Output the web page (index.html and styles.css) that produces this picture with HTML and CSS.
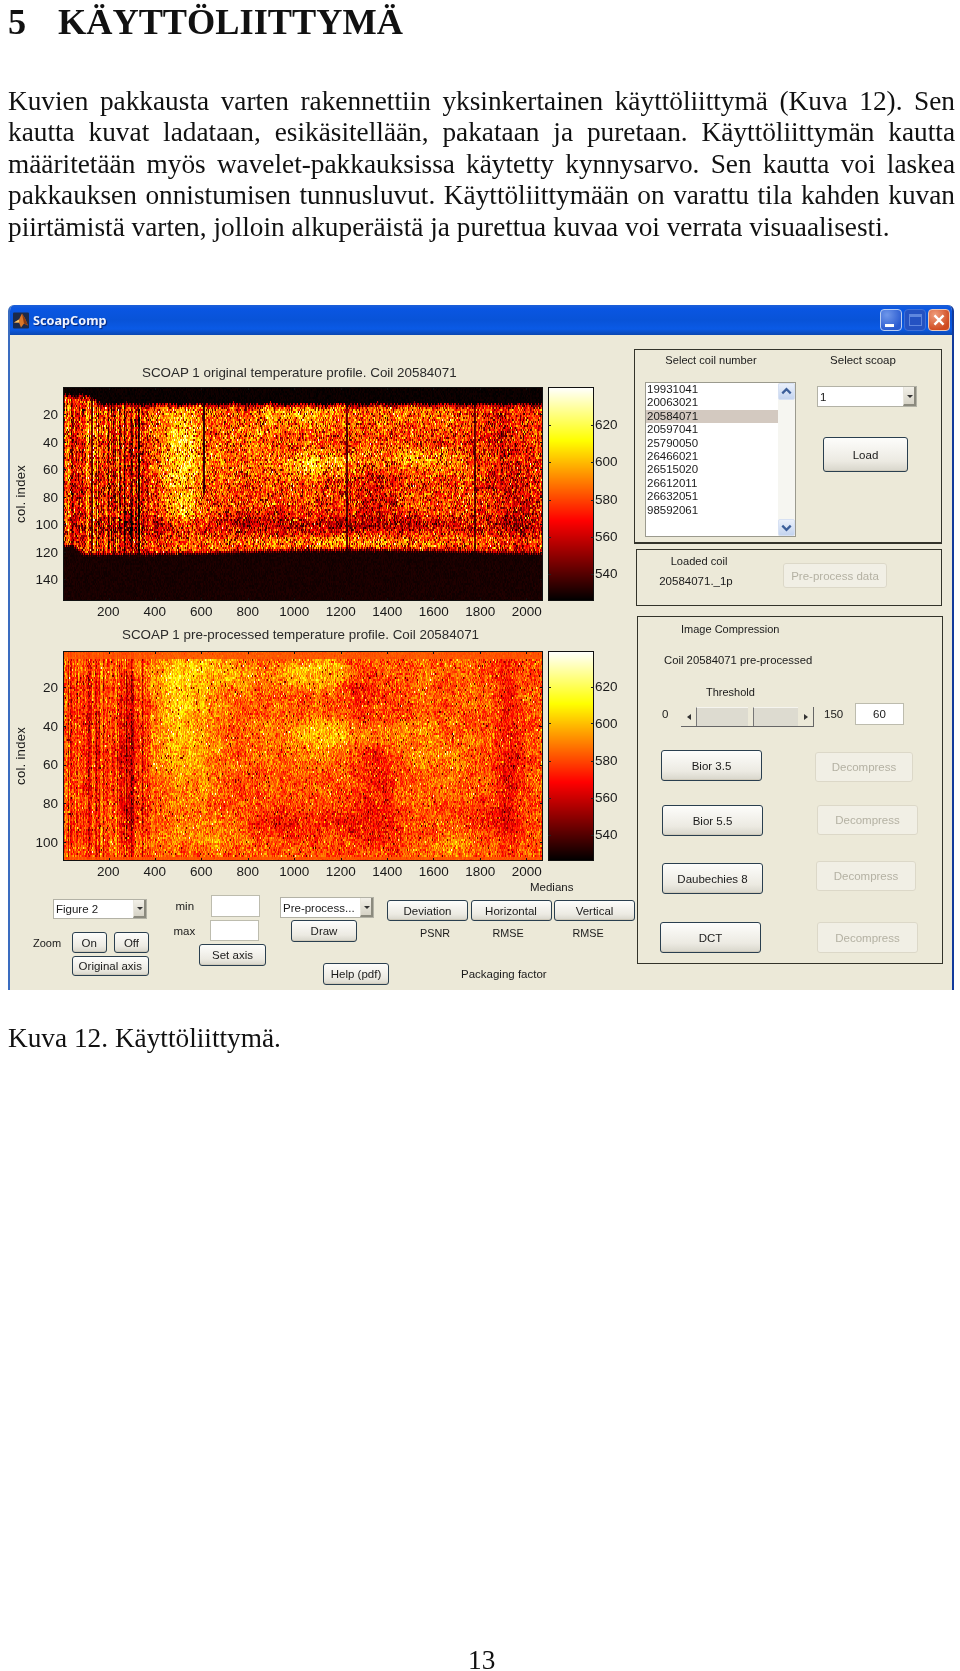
FILE: index.html
```html
<!DOCTYPE html>
<html lang="fi">
<head>
<meta charset="utf-8">
<title>5 Käyttöliittymä</title>
<link rel="stylesheet" href="styles.css">
</head>
<body>
<main class="page">
  <h1 class="heading"><span class="heading-num">5</span><span>KÄYTTÖLIITTYMÄ</span></h1>
  <p class="lead">Kuvien pakkausta varten rakennettiin yksinkertainen käyttöliittymä (Kuva 12). Sen kautta kuvat ladataan, esikäsitellään, pakataan ja puretaan. Käyttöliittymän kautta määritetään myös wavelet-pakkauksissa käytetty kynnysarvo. Sen kautta voi laskea pakkauksen onnistumisen tunnusluvut. Käyttöliittymään on varattu tila kahden kuvan piirtämistä varten, jolloin alkuperäistä ja purettua kuvaa voi verrata visuaalisesti.</p>

  <section class="window">
    <header class="titlebar">
      <svg class="app-icon" viewBox="0 0 16 16"><rect width="16" height="16" rx="1" fill="#1c2a4a"/><path d="M1 10 L6 7 L9 1 L12 6 L15 13 L11 11 L8 15 L6 10 Z" fill="#d9772a"/><path d="M9 1 L12 6 L15 13 L11 11 Z" fill="#8a3a12"/><path d="M1 10 L6 7 L6 10 Z" fill="#f2c46a"/></svg>
      <span class="app-title">ScoapComp</span>
      <span class="win-btn win-min"><i></i></span>
      <span class="win-btn win-max"><i></i></span>
      <span class="win-btn win-close">
        <svg viewBox="0 0 22 22"><path d="M6 6 L16 16 M16 6 L6 16" stroke="#fff" stroke-width="2.6" fill="none"/></svg>
      </span>
    </header>

    <div class="win-body">
      <div class="left">
        <div class="plot-title title-one">SCOAP 1 original temperature profile. Coil 20584071</div>
        <div class="chart chart-one">
          <div class="ylabel"><span>col. index</span></div>
          <div class="yticks yticks-one"><span>20</span><span>40</span><span>60</span><span>80</span><span>100</span><span>120</span><span>140</span></div>
          <canvas class="map" id="map1" width="480" height="214"></canvas>
          <canvas class="cbar" id="cbar1" width="46" height="214" data-ticks="38,75,113,150,187"></canvas>
          <div class="cticks cticks-one"><span>620</span><span>600</span><span>580</span><span>560</span><span>540</span></div>
        </div>
        <div class="xticks xticks-one"><span>200</span><span>400</span><span>600</span><span>800</span><span>1000</span><span>1200</span><span>1400</span><span>1600</span><span>1800</span><span>2000</span></div>
        <div class="plot-title title-two">SCOAP 1 pre-processed temperature profile. Coil 20584071</div>
        <div class="chart chart-two">
          <div class="ylabel"><span>col. index</span></div>
          <div class="yticks yticks-two"><span>20</span><span>40</span><span>60</span><span>80</span><span>100</span></div>
          <canvas class="map" id="map2" width="480" height="210"></canvas>
          <canvas class="cbar" id="cbar2" width="46" height="210" data-ticks="36,72,110,147,184"></canvas>
          <div class="cticks cticks-two"><span>620</span><span>600</span><span>580</span><span>560</span><span>540</span></div>
        </div>
        <div class="xticks xticks-two"><span>200</span><span>400</span><span>600</span><span>800</span><span>1000</span><span>1200</span><span>1400</span><span>1600</span><span>1800</span><span>2000</span></div>

        <div class="controls">
          <div class="group group-a">
            <div class="popup popup-figure"><span>Figure 2</span><b class="drop"></b></div>
            <div class="zoom-row">
              <span class="zoom-label">Zoom</span>
              <button class="btn btn-on">On</button>
              <button class="btn btn-off">Off</button>
            </div>
            <button class="btn btn-orig">Original axis</button>
          </div>
          <div class="group group-b">
            <div class="range-row range-min"><span class="range-label">min</span><span class="field field-min"></span></div>
            <div class="range-row range-max"><span class="range-label">max</span><span class="field field-max"></span></div>
            <button class="btn btn-set">Set axis</button>
          </div>
          <div class="group group-c">
            <div class="popup popup-pre"><span>Pre-process...</span><b class="drop"></b></div>
            <button class="btn btn-draw">Draw</button>
            <button class="btn btn-help">Help (pdf)</button>
          </div>
          <div class="group group-d">
            <div class="medians">Medians</div>
            <div class="metric-btns">
              <button class="btn">Deviation</button>
              <button class="btn">Horizontal</button>
              <button class="btn">Vertical</button>
            </div>
            <div class="metric-labels"><span>PSNR</span><span>RMSE</span><span>RMSE</span></div>
            <div class="packaging">Packaging factor</div>
          </div>
        </div>
      </div>

      <div class="right">
        <div class="panel panel-select">
          <div class="coil-col">
            <div class="coil-head">Select coil number</div>
            <div class="listbox">
              <ul class="items">
                <li>19931041</li><li>20063021</li><li class="selected">20584071</li><li>20597041</li><li>25790050</li><li>26466021</li><li>26515020</li><li>26612011</li><li>26632051</li><li>98592061</li>
              </ul>
              <div class="scrollbar">
                <span class="sb-btn"><svg viewBox="0 0 16 16"><path d="M3.5 10 L8 5.5 L12.5 10" fill="none" stroke="#3c5f9a" stroke-width="2.4"/></svg></span>
                <span class="sb-btn"><svg viewBox="0 0 16 16"><path d="M3.5 6 L8 10.5 L12.5 6" fill="none" stroke="#3c5f9a" stroke-width="2.4"/></svg></span>
              </div>
            </div>
          </div>
          <div class="scoap-col">
            <div class="scoap-head">Select scoap</div>
            <div class="popup popup-scoap"><span>1</span><b class="drop"></b></div>
            <button class="btn btn-load">Load</button>
          </div>
        </div>

        <div class="panel panel-loaded">
          <div class="loaded-col">
            <div class="loaded-head">Loaded coil</div>
            <div class="loaded-name">20584071._1p</div>
          </div>
          <button class="btn btn-off-state btn-pre">Pre-process data</button>
        </div>

        <div class="panel panel-compress">
          <div class="comp-title">Image Compression</div>
          <div class="comp-coil">Coil 20584071 pre-processed</div>
          <div class="comp-threshold">Threshold</div>
          <div class="slider-row">
            <span class="slider-min">0</span>
            <div class="slider">
              <span class="sl-arrow"><i class="tri-left"></i></span>
              <span class="sl-track sl-track-a"></span>
              <span class="sl-thumb"></span>
              <span class="sl-track"></span>
              <span class="sl-arrow"><i class="tri-right"></i></span>
            </div>
            <span class="slider-max">150</span>
            <span class="field field-value">60</span>
          </div>
          <div class="comp-row row-1"><button class="btn btn-wave">Bior 3.5</button><button class="btn btn-off-state btn-dec">Decompress</button></div>
          <div class="comp-row row-2"><button class="btn btn-wave">Bior 5.5</button><button class="btn btn-off-state btn-dec">Decompress</button></div>
          <div class="comp-row row-3"><button class="btn btn-wave">Daubechies 8</button><button class="btn btn-off-state btn-dec">Decompress</button></div>
          <div class="comp-row row-4"><button class="btn btn-wave">DCT</button><button class="btn btn-off-state btn-dec">Decompress</button></div>
        </div>
      </div>
    </div>
  </section>

  <p class="caption">Kuva 12. Käyttöliittymä.</p>
  <footer class="page-number">13</footer>
</main>
<script src="script.js"></script>
</body>
</html>
```

FILE: styles.css
```css
* { box-sizing: border-box; }
html, body { margin: 0; padding: 0; background: #fff; }
.page {
  width: 960px; height: 1671px; overflow: hidden;
  display: flex; flex-direction: column;
  font-family: "Liberation Serif", "Times New Roman", serif; color: #111;
  filter: blur(0.35px);
}
.heading {
  margin: 2px 0 0 8px; height: 40px; line-height: 40px;
  font-size: 36.3px; font-weight: 700; display: flex;
}
.heading-num { width: 50px; }
.lead {
  margin: 44px 5px 0 8px; font-size: 27.3px; line-height: 31.4px; text-align: justify;
}

.window {
  margin: 62px 0 0 8px; width: 946px; height: 685px;
  display: flex; flex-direction: column;
  border-left: 2px solid #3a6cc0; border-right: 2px solid #123a9c;
  border-radius: 6px 6px 0 0; background: #ece9d8;
  font-family: "Liberation Sans", Arial, sans-serif; font-size: 11.5px; color: #1a1a1a;
  overflow: hidden;
}
.titlebar {
  flex: none; height: 30px; display: flex; align-items: center; padding: 0 2px 0 3px;
  background: linear-gradient(#1d5fd6 0, #0a56e2 12%, #0853d8 50%, #0a5ae6 80%, #0b47b0 100%);
}
.app-icon { width: 16px; height: 17px; flex: none; }
.app-title {
  margin-left: 4px; color: #eef3ff; font: 700 12.7px "Noto Sans", sans-serif;
  text-shadow: 1px 1px 1px #06226e; flex: 1;
}
.win-btn {
  width: 22px; height: 22px; flex: none; border-radius: 4px; border: 1px solid #b9cdf2;
  margin-left: 2px; display: flex;
  background: radial-gradient(circle at 30% 25%, #6f97ea, #2a5bd0 75%);
}
.win-min i { margin: auto 0 3px 4px; width: 9px; height: 3px; background: #fff; display: block; }
.win-max { border-color: #3f70d6; background: #2452c2; }
.win-max i { margin: auto; width: 13px; height: 12px; border: 1px solid #5e86de; border-top-width: 3px; display: block; }
.win-close { background: radial-gradient(circle at 30% 25%, #ef9d7c, #cf4a20 75%); border-color: #e8c8b8; }
.win-close svg { width: 100%; height: 100%; }
.win-body { flex: 1; display: flex; min-height: 0; }

.left { flex: none; width: 624px; display: flex; flex-direction: column; }
.plot-title { height: 20px; line-height: 20px; font-size: 13.4px; white-space: nowrap; color: #2a2a2a; }
.title-one { margin: 28px 0 0 132px; }
.title-two { margin: 2px 0 0 112px; }
.chart { flex: none; display: flex; align-items: stretch; }
.chart-one { margin-top: 4px; height: 214px; }
.chart-two { margin-top: 6px; height: 210px; }
.ylabel { width: 20px; display: flex; align-items: center; justify-content: center; }
.ylabel span { writing-mode: vertical-rl; transform: rotate(180deg); font-size: 13px; white-space: nowrap; letter-spacing: .3px; }
.yticks { width: 28px; display: flex; flex-direction: column; align-items: flex-end; font-size: 13.5px; }
.yticks span { display: flex; align-items: center; flex: none; }
.yticks-one { padding-top: 14px; }
.yticks-one span { height: 27.5px; }
.yticks-two { padding-top: 17px; }
.yticks-two span { height: 38.75px; }
.map { display: block; width: 480px; height: 100%; margin-left: 4.5px; flex: none; }
.cbar { display: block; width: 46px; height: 100%; margin-left: 5.5px; flex: none; }
.cticks { margin-left: 1px; display: flex; flex-direction: column; font-size: 13.5px; }
.cticks span { display: flex; align-items: center; flex: none; }
.cticks-one { padding-top: 19px; }
.cticks-one span { height: 37.25px; }
.cticks-two { padding-top: 17px; }
.cticks-two span { height: 37px; }
.xticks { flex: none; height: 22px; display: flex; font-size: 13.5px; padding-left: 75px; }
.xticks span { flex: none; width: 46.5px; text-align: center; line-height: 22px; }

.controls { flex: 1; display: flex; min-height: 0; }
.group { flex: none; display: flex; flex-direction: column; align-items: flex-start; }
.group-a { margin-left: 23px; width: 116px; }
.group-b { margin-left: 24.5px; width: 92.5px; }
.group-c { margin-left: 14px; width: 107px; }
.group-d { width: 248px; }

.btn {
  display: block; padding: 0; font: inherit; color: #1a1a1a; white-space: nowrap; flex: none;
  border: 1px solid #2a3f4f; border-radius: 3px;
  background: linear-gradient(#fdfdfb, #eceae2 70%, #d8d6cb);
  box-shadow: inset 0 -1px 0 #cfcabb;
}
.btn-off-state {
  border-color: #dcd8c8; color: #b4b1a3; background: #f1efe5; box-shadow: none;
}
.popup {
  display: flex; align-items: center; background: #fff; flex: none;
  border: 1px solid #b3b2a6; padding-left: 2px;
}
.popup span { flex: 1; white-space: nowrap; overflow: hidden; }
.drop {
  flex: none; width: 13px; height: 100%; display: block; position: relative;
  background: linear-gradient(#f2f0e8, #d6d3c6); border-left: 1px solid #e8e6dc;
  border-right: 2px solid #8b8a7e; border-bottom: 2px solid #8b8a7e;
}
.drop::after {
  content: ""; position: absolute; left: 3px; top: 45%;
  border: 3px solid transparent; border-top-color: #333; border-bottom-width: 0;
}
.field { display: block; background: #fff; border: 1px solid #bdbcae; flex: none; }

.popup-figure { margin: 16px 0 0 20px; width: 94px; height: 20px; }
.zoom-row { margin-top: 13px; display: flex; align-items: center; width: 116px; }
.zoom-label { width: 38.5px; flex: none; font-size: 11px; }
.btn-on { width: 35.5px; height: 21px; }
.btn-off { width: 35px; height: 21px; margin-left: 7px; }
.btn-orig { margin: 3px 0 0 38.5px; width: 77.5px; height: 20px; }

.range-row { display: flex; align-items: center; }
.range-min { margin-top: 12px; height: 22px; }
.range-max { margin-top: 3px; height: 21px; }
.range-label { padding-left: 2px; }
.range-min .range-label { width: 37.5px; }
.range-max .range-label { width: 36.5px; padding-left: 0; }
.field-min, .field-max { width: 49px; height: 100%; }
.btn-set { margin: 3px 0 0 25.5px; width: 67px; height: 22px; }

.popup-pre { margin-top: 14px; width: 93.5px; height: 21px; }
.btn-draw { margin: 2px 0 0 11px; width: 66px; height: 22px; }
.btn-help { margin: 21px 0 0 43px; width: 66px; height: 22px; }

.medians { margin: -1px 0 0 143px; height: 10px; line-height: 10px; }
.metric-btns { margin-top: 8px; display: flex; }
.metric-btns .btn { width: 81px; height: 21px; margin-right: 2.5px; }
.metric-labels { margin-top: 5px; display: flex; height: 14px; line-height: 14px; font-size: 10.8px; text-align: center; }
.metric-labels span:nth-child(1) { width: 96px; }
.metric-labels span:nth-child(2) { width: 50px; }
.metric-labels span:nth-child(3) { width: 110px; }
.packaging { margin: 27px 0 0 74px; line-height: 14px; }

.right { flex: 1; display: flex; flex-direction: column; min-width: 0; }
.panel { flex: none; border: 1px solid #33332a; }
.panel-select { margin: 14px 0 0 0; width: 308px; height: 195px; display: flex; border-bottom-width: 2px; }
.coil-col { margin-left: 10px; width: 151px; flex: none; }
.coil-head { margin-top: 3px; height: 14px; line-height: 14px; text-align: center; padding-right: 19px; font-size: 11.1px; }
.listbox { margin-top: 15px; width: 151px; height: 155px; background: #fff; border: 1px solid #9b9a8e; display: flex; }
.items { list-style: none; margin: 0; padding: 0; flex: 1; }
.items li { height: 13.4px; line-height: 13.4px; padding-left: 1px; }
.items .selected { background: #d3c9c0; }
.scrollbar { width: 17px; display: flex; flex-direction: column; justify-content: space-between; background: #f6f6f1; }
.sb-btn { width: 17px; height: 17px; background: linear-gradient(#eaf0fb, #c4d4ef); border: 1px solid #d7e1f3; border-radius: 2px; display: block; }
.sb-btn svg { display: block; width: 100%; height: 100%; }
.scoap-col { margin-left: 21px; width: 100px; flex: none; }
.scoap-head { margin-top: 3px; height: 14px; line-height: 14px; text-align: center; padding-right: 8px; }
.popup-scoap { margin-top: 19px; width: 100px; height: 21px; }
.btn-load { margin: 30px 0 0 6px; width: 85px; height: 35px; }

.panel-loaded { margin: 5px 0 0 2px; width: 306px; height: 57px; display: flex; align-items: flex-start; }
.loaded-col { flex: none; width: 124px; text-align: center; }
.loaded-head { margin-top: 4px; height: 14px; line-height: 14px; font-size: 11.1px; }
.loaded-name { margin-top: 6px; height: 14px; line-height: 14px; padding-right: 6px; }
.btn-pre { margin: 13px 0 0 22px; width: 104px; height: 25px; }

.panel-compress { margin: 10px 0 0 3px; width: 306px; height: 348px; display: flex; flex-direction: column; }
.comp-title { margin: 5px 0 0 43px; height: 14px; line-height: 14px; font-size: 11px; }
.comp-coil { margin: 17px 0 0 26px; height: 14px; line-height: 14px; font-size: 11.3px; }
.comp-threshold { margin: 18px 0 0 68px; height: 14px; line-height: 14px; font-size: 11px; }
.slider-row { margin-top: 4px; height: 22px; display: flex; align-items: center; }
.slider-min { margin-left: 24px; width: 19px; flex: none; }
.slider {
  margin-top: 6px; width: 133px; height: 20px; flex: none; display: flex; background: #dddbd0;
  border-bottom: 1px solid #666; border-right: 1px solid #666;
}
.sl-arrow { width: 15px; flex: none; display: flex; align-items: center; justify-content: center; background: #ece9d8; }
.tri-left, .tri-right { display: block; border: 3px solid transparent; }
.tri-left { border-right: 4px solid #333; border-left-width: 0; }
.tri-right { border-left: 4px solid #333; border-right-width: 0; }
.sl-track { flex: 1; border-left: 1px solid #777; border-top: 1px solid #f5f4ee; }
.sl-track-a { flex: none; width: 52px; }
.sl-thumb { width: 5px; flex: none; background: #ece9d8; }
.slider-max { margin-left: 10px; width: 31px; flex: none; }
.field-value { width: 49px; height: 22px; line-height: 20px; text-align: center; }

.comp-row { display: flex; align-items: flex-start; }
.btn-wave { width: 101px; height: 31px; }
.btn-dec { width: 101px; height: 30px; }
.row-1 { margin: 25px 0 0 23px; }
.row-1 .btn-dec { margin: 2px 0 0 53px; width: 98px; }
.row-2 { margin: 23px 0 0 24px; }
.row-2 .btn-dec { margin-left: 54px; }
.row-3 { margin: 25px 0 0 24px; }
.row-3 .btn-wave { margin-top: 2px; }
.row-3 .btn-dec { margin-left: 53px; width: 100px; }
.row-4 { margin: 28px 0 0 22px; }
.row-4 .btn-dec { margin-left: 56px; height: 31px; }

.caption { margin: 32px 0 0 8px; font-size: 27.3px; line-height: 32px; }
.page-number { margin: auto 0 0 468px; height: 22px; font-size: 27.3px; line-height: 22px; }
```

FILE: script.js
```js
(function () {
  function rng(seed) {
    return function () {
      seed |= 0; seed = seed + 0x6d2b79f5 | 0;
      var t = Math.imul(seed ^ seed >>> 15, 1 | seed);
      t = t + Math.imul(t ^ t >>> 7, 61 | t) ^ t;
      return ((t ^ t >>> 14) >>> 0) / 4294967296;
    };
  }
  function clamp(v) { return v < 0 ? 0 : v > 1 ? 1 : v; }
  function hot(v) {
    return [255 * clamp(v / 0.375), 255 * clamp((v - 0.375) / 0.375), 255 * clamp((v - 0.75) / 0.25)];
  }
  function field(blobs, x, y) {
    var s = 0;
    for (var i = 0; i < blobs.length; i++) {
      var b = blobs[i], dx = (x - b[0]) / b[2], dy = (y - b[1]) / b[3];
      s += b[4] * Math.exp(-(dx * dx + dy * dy));
    }
    return s;
  }
  function midNoise(r, w, h, cw, ch) {
    var cols = Math.ceil(w / cw) + 2, rows = Math.ceil(h / ch) + 2, g = [];
    for (var i = 0; i < cols * rows; i++) g.push(r() * 2 - 1);
    return function (x, y) {
      var gx = x / cw, gy = y / ch, ix = Math.floor(gx), iy = Math.floor(gy), tx = gx - ix, ty = gy - iy;
      var a = g[iy * cols + ix], b = g[iy * cols + ix + 1], c = g[(iy + 1) * cols + ix], d = g[(iy + 1) * cols + ix + 1];
      return (a * (1 - tx) + b * tx) * (1 - ty) + (c * (1 - tx) + d * tx) * ty;
    };
  }
  function drawMap(id, o) {
    var c = document.getElementById(id), w = c.width, h = c.height;
    var ctx = c.getContext('2d'), img = ctx.createImageData(w, h), r = rng(o.seed);
    function gauss() { return r() + r() + r() - 1.5; }
    var col = [];
    for (var i = 0; i < w; i++) {
      var fx = i / w, amp = o.streakR + (o.streakL - o.streakR) * clamp((0.2 - fx) / 0.04);
      col.push(gauss() * amp * 1.6);
    }
    var mid = midNoise(r, w, h, 12, 9);
    for (var yy = 0; yy < h; yy += 2) {
      var fy = yy / h;
      for (var xx = 0; xx < w; xx++) {
        var f = xx / w;
        var v = o.base + field(o.blobs, f, fy) + col[xx] + mid(xx, yy) * o.mid + gauss() * o.noise;
        var p = r();
        if (p < o.dark) v *= 0.3; else if (p < o.dark + o.bright) v += 0.3;
        o.lines.forEach(function (l) {
          if (Math.abs(f - l[0]) < 0.0022 && fy < l[1]) v *= l[2];
        });
        v = o.shape ? o.shape(f, fy, v, r) : v;
        var rgb = hot(v);
        for (var k = 0; k < 2 && yy + k < h; k++) {
          var idx = ((yy + k) * w + xx) * 4;
          img.data[idx] = rgb[0]; img.data[idx + 1] = rgb[1]; img.data[idx + 2] = rgb[2]; img.data[idx + 3] = 255;
        }
      }
    }
    var off = document.createElement('canvas');
    off.width = w; off.height = h;
    off.getContext('2d').putImageData(img, 0, 0);
    ctx.filter = 'blur(0.4px)';
    ctx.drawImage(off, 0, 0);
    ctx.filter = 'none';
    ctx.strokeStyle = '#111'; ctx.lineWidth = 1;
    ctx.strokeRect(0.5, 0.5, w - 1, h - 1);
    ctx.fillStyle = '#111';
    for (var t = 0; t < 10; t++) {
      var tx = Math.round(45.5 + 46.4 * t);
      ctx.fillRect(tx, 0, 1, 3);
      ctx.fillRect(tx, h - 3, 1, 3);
    }
    o.yticks.forEach(function (ty) {
      ctx.fillRect(0, ty, 3, 1);
      ctx.fillRect(w - 3, ty, 3, 1);
    });
  }
  function drawBar(id) {
    var c = document.getElementById(id), ctx = c.getContext('2d'), w = c.width, h = c.height;
    for (var y = 0; y < h; y++) {
      var rgb = hot(1 - y / (h - 1));
      ctx.fillStyle = 'rgb(' + rgb.map(Math.round).join(',') + ')';
      ctx.fillRect(0, y, w, 1);
    }
    ctx.strokeStyle = '#111';
    ctx.strokeRect(0.5, 0.5, w - 1, h - 1);
    ctx.fillStyle = '#222';
    c.dataset.ticks.split(',').forEach(function (t) {
      ctx.fillRect(0, +t, 3, 1);
      ctx.fillRect(w - 3, +t, 3, 1);
    });
  }

  drawMap('map1', {
    seed: 12, base: 0.47, noise: 0.24, mid: 0.05, dark: 0.1, bright: 0.025, streakL: 0.17, streakR: 0.035,
    blobs: [
      [0.245, 0.3, 0.045, 0.24, 0.28], [0.25, 0.58, 0.03, 0.1, 0.15], [0.06, 0.22, 0.03, 0.2, 0.08],
      [0.5, 0.13, 0.13, 0.07, 0.16], [0.53, 0.36, 0.07, 0.06, 0.22], [0.75, 0.34, 0.1, 0.05, 0.18],
      [0.78, 0.12, 0.07, 0.06, 0.1], [0.38, 0.3, 0.08, 0.15, 0.07], [0.6, 0.72, 0.28, 0.025, 0.14],
      [0.15, 0.45, 0.035, 0.4, -0.16], [0.21, 0.65, 0.03, 0.1, -0.05], [0.65, 0.5, 0.05, 0.13, -0.14],
      [0.55, 0.64, 0.42, 0.045, -0.18], [0.94, 0.55, 0.05, 0.25, -0.15], [0.135, 0.68, 0.015, 0.08, -0.22],
      [0.9, 0.2, 0.05, 0.2, -0.08]
    ],
    lines: [[0.293, 0.49, 0.15], [0.059, 0.76, 0.35], [0.59, 0.78, 0.3], [0.858, 0.78, 0.3]],
    yticks: [27, 55, 82, 110, 137, 165, 192],
    shape: function (f, y, v, r) {
      var top = 0.075 + 0.006 * Math.sin(f * 900) + 0.004 * Math.sin(f * 3100) - 0.045 * clamp((0.08 - f) / 0.04);
      var bot = 0.755 + 0.01 * Math.sin(f * 6 + 1) + 0.006 * Math.sin(f * 1700) - 0.04 * clamp((0.04 - f) / 0.02);
      if (y < top) return 0.03 * r();
      if (y > bot) {
        var k = clamp(1 - (y - bot) / 0.02);
        return Math.max(v * k, 0.02 + 0.03 * r());
      }
      if (y < top + 0.015) return v * 0.55;
      return v;
    }
  });
  drawMap('map2', {
    seed: 77, base: 0.5, noise: 0.16, mid: 0.05, dark: 0.015, bright: 0.015, streakL: 0.1, streakR: 0.02,
    blobs: [
      [0.25, 0.35, 0.07, 0.35, 0.16], [0.32, 0.1, 0.16, 0.09, 0.1], [0.53, 0.4, 0.09, 0.09, 0.16],
      [0.67, 0.38, 0.08, 0.06, 0.1], [0.78, 0.5, 0.1, 0.1, 0.06], [0.54, 0.1, 0.08, 0.07, 0.12],
      [0.82, 0.9, 0.03, 0.08, 0.1], [0.31, 0.88, 0.1, 0.06, 0.08],
      [0.14, 0.5, 0.04, 0.55, -0.18], [0.05, 0.45, 0.02, 0.5, -0.08], [0.65, 0.55, 0.04, 0.35, -0.12],
      [0.46, 0.82, 0.08, 0.08, -0.11], [0.62, 0.82, 0.1, 0.1, -0.09], [0.93, 0.48, 0.03, 0.5, -0.13],
      [0.88, 0.78, 0.07, 0.08, -0.09], [0.42, 0.1, 0.03, 0.1, -0.04], [0.61, 0.2, 0.03, 0.15, -0.08]
    ],
    lines: [],
    yticks: [36, 75, 114, 152, 191],
    shape: function (f, y, v) {
      if (y < 0.035 || y > 0.972) return 0.5 + (v - 0.5) * 0.15;
      return v;
    }
  });
  drawBar('cbar1');
  drawBar('cbar2');
})();
```
